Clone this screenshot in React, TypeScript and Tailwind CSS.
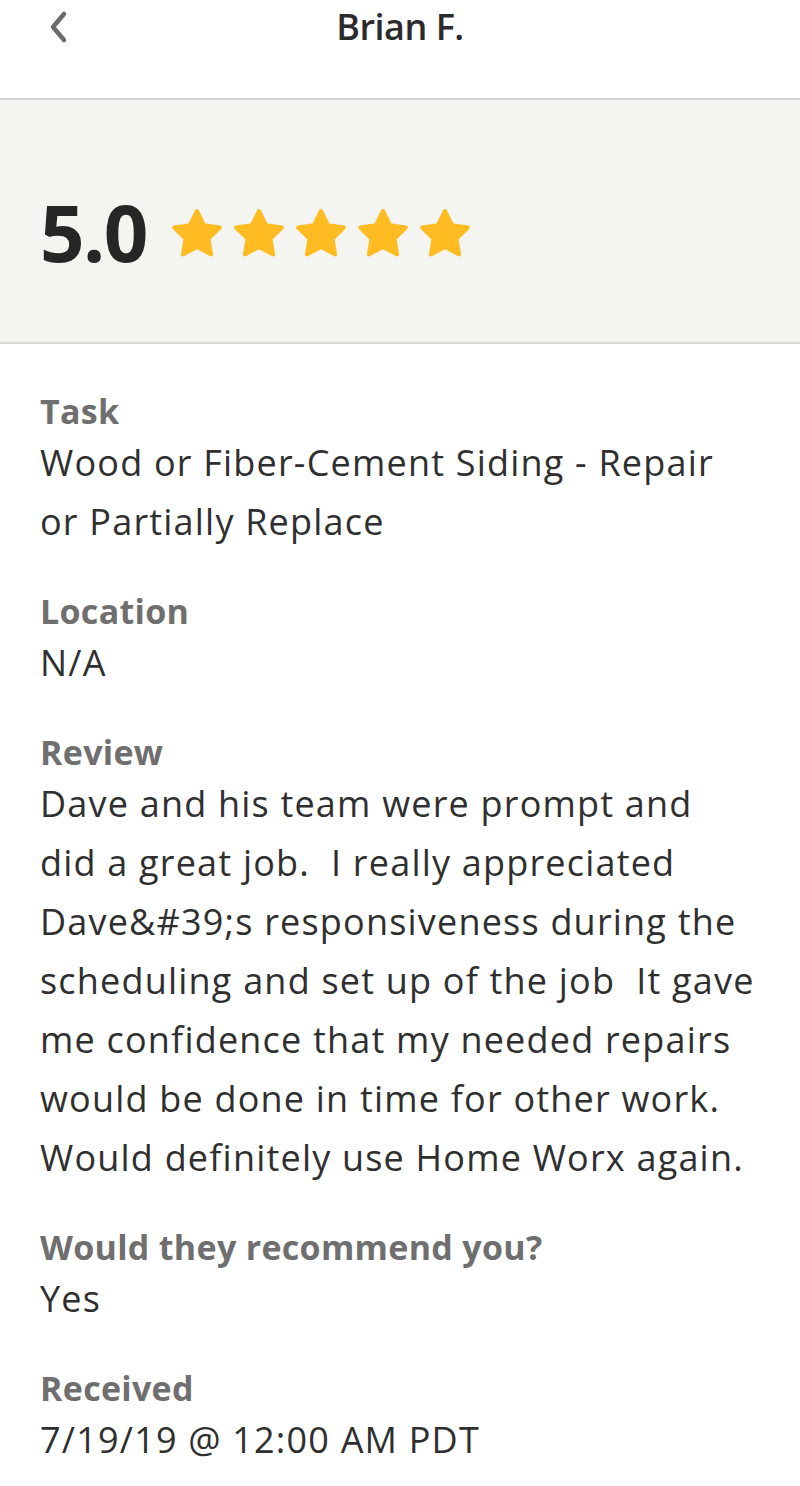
import React from "react";

const Star = () => (
  <svg width="52" height="50" viewBox="0 0 52 50" className="block">
    <path
      d="M26 3 L33.05 17.29 L48.83 19.58 L37.41 30.71 L40.11 46.42 L26 39 L11.89 46.42 L14.59 30.71 L3.17 19.58 L18.95 17.29 Z"
      fill="#FEBC22"
      stroke="#FEBC22"
      strokeWidth="4"
      strokeLinejoin="round"
    />
  </svg>
);

const Section = ({ label, lines }: { label: string; lines: string[] }) => (
  <div className="flex flex-col">
    <div className="text-[34px] leading-[44px] font-bold text-[#6f6f6f] tracking-[0.3px] whitespace-nowrap">
      {label}
    </div>
    {lines.map((l, i) => (
      <div key={i} className="text-[36px] leading-[59px] text-[#2f2f2f] tracking-[1.2px] whitespace-pre">
        {l}
      </div>
    ))}
  </div>
);

export default function App() {
  return (
    <div
      className="w-[800px] h-[1486px] bg-white overflow-hidden"
      style={{ fontFamily: '"Open Sans", "Liberation Sans", sans-serif' }}
    >
      <header className="h-[100px] relative flex justify-center border-b-2 border-[#d4d4d4]">
        <svg
          width="24"
          height="36"
          viewBox="0 0 24 36"
          className="absolute left-[47px] top-[9px]"
        >
          <path d="M17 5 L6 18 L17 31" fill="none" stroke="#6b6b6b" strokeWidth="4.5" strokeLinecap="round" strokeLinejoin="round" />
        </svg>
        <div className="text-[36px] leading-[54px] font-semibold text-[#2b2b2b] tracking-[-0.5px]">
          Brian F.
        </div>
      </header>
      <section className="h-[244px] bg-[#f4f4f1] border-b-2 border-[#d8d8d8] flex items-center px-[40px] pt-[22px]">
        <div className="text-[78px] leading-none font-bold text-[#262626] tracking-[-1.5px]">5.0</div>
        <div className="flex ml-[24px] gap-[10px] mt-[2px]">
          <Star />
          <Star />
          <Star />
          <Star />
          <Star />
        </div>
      </section>
      <main className="px-[40px] pt-[45px] flex flex-col gap-[38px]">
        <Section label="Task" lines={["Wood or Fiber-Cement Siding - Repair", "or Partially Replace"]} />
        <Section label="Location" lines={["N/A"]} />
        <Section
          label="Review"
          lines={[
            "Dave and his team were prompt and",
            "did a great job.  I really appreciated",
            "Dave&#39;s responsiveness during the",
            "scheduling and set up of the job  It gave",
            "me confidence that my needed repairs",
            "would be done in time for other work.",
            "Would definitely use Home Worx again.",
          ]}
        />
        <Section label="Would they recommend you?" lines={["Yes"]} />
        <Section label="Received" lines={["7/19/19 @ 12:00 AM PDT"]} />
      </main>
    </div>
  );
}
